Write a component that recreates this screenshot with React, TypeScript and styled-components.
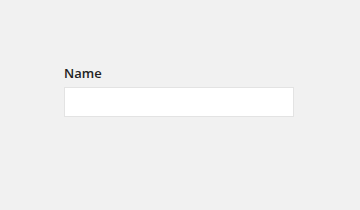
import React from "react";
import styled, { createGlobalStyle } from "styled-components";

const Global = createGlobalStyle`
  html, body { margin: 0; padding: 0; background: #f1f1f1; }
  body { font-family: "Open Sans", "Liberation Sans", sans-serif; }
`;

const Page = styled.div`
  width: 360px;
  height: 210px;
  box-sizing: border-box;
  padding: 65px 0 0 64px;
`;

const Field = styled.div`
  display: flex;
  flex-direction: column;
  gap: 5px;
  width: 230px;
`;

const Label = styled.label`
  font-size: 13px;
  font-weight: 600;
  color: #222;
  line-height: 17px;
`;

const Input = styled.input`
  box-sizing: border-box;
  width: 230px;
  height: 30px;
  border: 1px solid #e3e3e3;
  background: #fff;
  margin: 0;
  padding: 0 8px;
  font-family: inherit;
  font-size: 13px;
  outline: none;
`;

export default function App() {
  return (
    <>
      <Global />
      <Page>
        <Field>
          <Label htmlFor="name">Name</Label>
          <Input id="name" type="text" />
        </Field>
      </Page>
    </>
  );
}
